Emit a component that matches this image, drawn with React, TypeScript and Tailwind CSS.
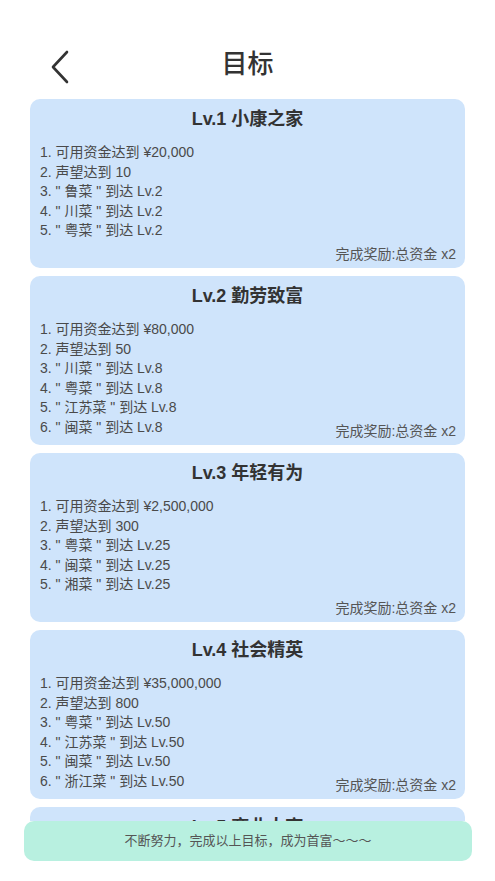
const levels = [
  {
    title: "Lv.1 小康之家",
    items: [
      "1. 可用资金达到 ¥20,000",
      "2. 声望达到 10",
      '3. " 鲁菜 " 到达 Lv.2',
      '4. " 川菜 " 到达 Lv.2',
      '5. " 粤菜 " 到达 Lv.2',
    ],
  },
  {
    title: "Lv.2 勤劳致富",
    items: [
      "1. 可用资金达到 ¥80,000",
      "2. 声望达到 50",
      '3. " 川菜 " 到达 Lv.8',
      '4. " 粤菜 " 到达 Lv.8',
      '5. " 江苏菜 " 到达 Lv.8',
      '6. " 闽菜 " 到达 Lv.8',
    ],
  },
  {
    title: "Lv.3 年轻有为",
    items: [
      "1. 可用资金达到 ¥2,500,000",
      "2. 声望达到 300",
      '3. " 粤菜 " 到达 Lv.25',
      '4. " 闽菜 " 到达 Lv.25',
      '5. " 湘菜 " 到达 Lv.25',
    ],
  },
  {
    title: "Lv.4 社会精英",
    items: [
      "1. 可用资金达到 ¥35,000,000",
      "2. 声望达到 800",
      '3. " 粤菜 " 到达 Lv.50',
      '4. " 江苏菜 " 到达 Lv.50',
      '5. " 闽菜 " 到达 Lv.50',
      '6. " 浙江菜 " 到达 Lv.50',
    ],
  },
  {
    title: "Lv.5 商业大亨",
    items: [],
  },
];

export default function App() {
  return (
    <div
      className="flex h-[881px] w-[495px] flex-col overflow-hidden bg-white"
      style={{ fontFamily: '"Liberation Sans", "Noto Sans CJK SC", sans-serif' }}
    >
      {/* header */}
      <div className="flex h-[99px] shrink-0 items-start px-[48px] pt-[44px]">
        <button className="mt-[6px] w-[24px] text-[#333]">
          <svg width="24" height="34" viewBox="0 0 24 34" fill="none">
            <path
              d="M19 2 L5 17 L19 32"
              stroke="#333"
              strokeWidth="2.6"
              strokeLinecap="round"
              strokeLinejoin="round"
            />
          </svg>
        </button>
        <h1 className="flex-1 pr-[24px] text-center text-[26px] leading-[40px] font-medium text-[#333]">
          目标
        </h1>
      </div>

      <div className="flex min-h-0 flex-1 flex-col gap-[8px] overflow-hidden px-[30px]">
        {levels.map((lv) => (
          <div
            key={lv.title}
            className="relative h-[169px] shrink-0 rounded-[10px] bg-[#cfe4fb] px-[10px] pt-[8px]"
          >
            <div className="text-center text-[18px] leading-[24px] font-bold text-[#333]">
              {lv.title}
            </div>
            {lv.items.length > 0 && (
              <>
                <ul className="mt-[12px] text-[14px] leading-[19.6px] text-[#4a4a4a]">
                  {lv.items.map((it) => (
                    <li key={it}>{it}</li>
                  ))}
                </ul>
                <div className="absolute bottom-[4px] right-[9px] text-[14px] leading-[20px] text-[#555]">
                  完成奖励:总资金 x2
                </div>
              </>
            )}
          </div>
        ))}
      </div>

      {/* footer banner */}
      <div className="shrink-0 pb-[20px] pl-[24px] pr-[23px]">
        <div className="flex h-[40px] items-center justify-center rounded-[10px] bg-[#b8f0e0] text-[13px] text-[#555]">
          不断努力，完成以上目标，成为首富～～～
        </div>
      </div>
    </div>
  );
}
